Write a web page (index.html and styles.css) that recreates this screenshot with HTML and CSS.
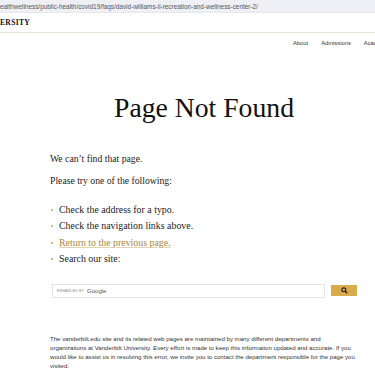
FILE: index.html
```html
<!DOCTYPE html>
<html lang="en">
<head>
<meta charset="utf-8">
<title>Page Not Found</title>
<link rel="stylesheet" href="styles.css">
</head>
<body>
<div class="urlbar">ealthwellness/public-health/covid19/faqs/david-williams-ii-recreation-and-wellness-center-2/</div>
<header class="brand"><span class="wordmark">ERSITY</span></header>
<nav class="nav">
  <a href="#">About</a>
  <a href="#">Admissions</a>
  <a href="#">Academics</a>
</nav>
<main class="main">
  <h1 class="title">Page Not Found</h1>
  <p class="lead">We can’t find that page.</p>
  <p class="lead">Please try one of the following:</p>
  <ul class="options">
    <li>Check the address for a typo.</li>
    <li>Check the navigation links above.</li>
    <li><a href="#" class="back">Return to the previous page.</a></li>
    <li>Search our site:</li>
  </ul>
  <form class="search">
    <div class="search-box"><span class="enh">ENHANCED BY</span><span class="goog">Google</span></div>
    <button type="button" class="search-btn"><svg width="7" height="7" viewBox="0 0 10 10"><circle cx="4" cy="4" r="2.8" fill="none" stroke="#222" stroke-width="1.6"/><line x1="6" y1="6" x2="9" y2="9" stroke="#222" stroke-width="1.8"/></svg></button>
  </form>
  <p class="footnote">The vanderbilt.edu site and its related web pages are maintained by many different departments and organizations at Vanderbilt University. Every effort is made to keep this information updated and accurate. If you would like to assist us in resolving this error, we invite you to contact the department responsible for the page you visited.</p>
</main>
</body>
</html>
```
FILE: styles.css
```css
html, body { margin: 0; padding: 0; background: #fff; }
body { font-family: "Liberation Serif", serif; color: #222; overflow: hidden; width: 375px; height: 375px; }
.urlbar {
  height: 12px;
  background: #eef0f6;
  border-bottom: 1px solid #e6e8ec;
  font-family: "Liberation Sans", sans-serif;
  font-size: 6.4px;
  line-height: 13px;
  color: #555;
  white-space: nowrap;
  overflow: hidden;
}
.brand {
  height: 19px;
  border-bottom: 1px solid #ece6d6;
  display: flex;
  align-items: center;
}
.wordmark {
  font-family: "Liberation Serif", serif;
  font-size: 7.6px;
  font-weight: bold;
  letter-spacing: 0.3px;
  color: #111;
}
.nav {
  display: flex;
  justify-content: flex-start;
  gap: 13px;
  padding: 7px 0 0 293px;
  height: 15px;
  white-space: nowrap;
  overflow: hidden;
}
.nav a {
  font-family: "Liberation Sans", sans-serif;
  font-size: 5.8px;
  color: #333;
  text-decoration: none;
}
.main { padding: 0 18px 0 50px; }
.title {
  margin: 37px 0 0 -50px;
  padding-left: 51px;
  text-align: center;
  font-weight: normal;
  font-size: 27.7px;
  line-height: 32px;
  color: #111;
}
.lead { margin: 0; font-size: 9.7px; line-height: 14px; color: #222; }
.title + .lead { margin-top: 28px; }
.lead + .lead { margin-top: 8px; }
.options {
  list-style: none;
  margin: 14px 0 0 0;
  padding: 0;
}
.options li {
  position: relative;
  padding-left: 9px;
  font-size: 9.9px;
  line-height: 16.4px;
  color: #222;
}
.options li::before {
  content: "";
  position: absolute;
  left: 1px;
  top: 7px;
  width: 2px;
  height: 2px;
  border-radius: 50%;
  background: #c9a65a;
}
.back { color: #a98642; text-decoration: underline; text-decoration-color: #e3d3ae; text-underline-offset: 1px; }
.search {
  display: flex;
  align-items: center;
  gap: 6px;
  margin: 16px 0 0 2px;
}
.search-box {
  width: 270px;
  height: 12px;
  border: 1px solid #e4e4e4;
  display: flex;
  align-items: center;
  padding-left: 4px;
  box-sizing: content-box;
}
.enh { font-family: "Liberation Sans", sans-serif; font-size: 3.6px; color: #888; letter-spacing: 0.1px; }
.goog { font-family: "Liberation Sans", sans-serif; font-size: 6px; color: #555; margin-left: 3px; }
.search-btn {
  width: 26px;
  height: 11px;
  background: #d9ab4c;
  border: 0;
  padding: 0;
  display: flex;
  align-items: center;
  justify-content: center;
}
.footnote {
  margin: 36px 0 0 0;
  font-family: "Liberation Sans", sans-serif;
  font-size: 6.1px;
  line-height: 9px;
  color: #333;
}
```
